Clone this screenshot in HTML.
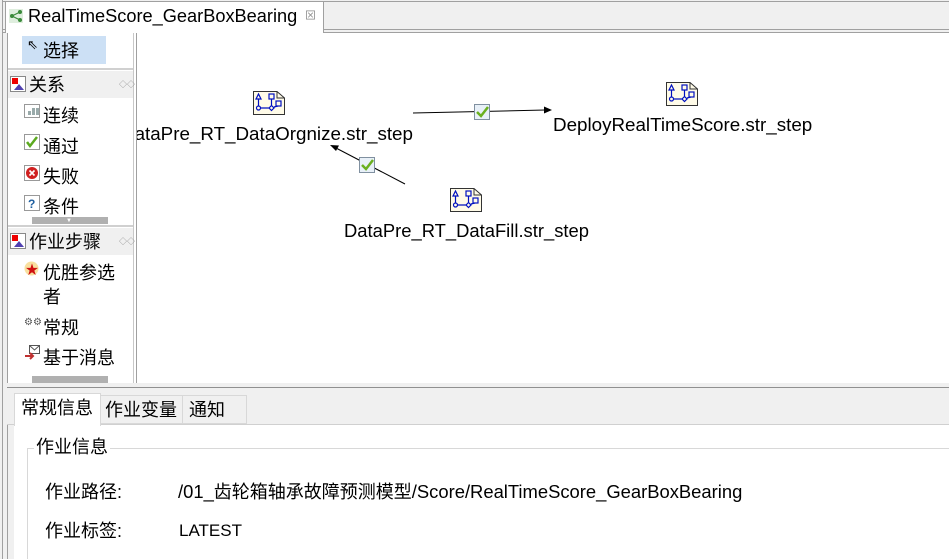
<!DOCTYPE html>
<html><head><meta charset="utf-8"><style>
*{margin:0;padding:0;box-sizing:border-box}
body{width:949px;height:559px;overflow:hidden;background:#fff;font-family:"Liberation Sans","Noto Sans CJK SC",sans-serif;position:relative;color:#000}
.a{position:absolute}
.t{font-size:17px;white-space:nowrap}
.pal{font-size:18px;white-space:nowrap;line-height:22px}
.c{font-size:18px}
</style></head><body>
<div class="a" style="left:0;top:0;width:949px;height:559px;background:#f0f0f0"></div>
<div class="a" style="left:2px;top:0;width:1px;height:559px;background:#a0a0a0"></div>
<div class="a" style="left:3px;top:1px;width:946px;height:1px;background:#a0a0a0"></div>
<div class="a" style="left:3px;top:29px;width:946px;height:1px;background:#a0a0a0"></div>
<div class="a" style="left:3px;top:32px;width:946px;height:1px;background:#a0a0a0"></div>
<div class="a" style="left:5px;top:2px;width:319px;height:31px;background:#fff;border-left:1px solid #a0a0a0;border-right:1px solid #a0a0a0"></div>
<svg class="a" style="left:9px;top:9px" width="14" height="14"><rect x="0" y="0" width="14" height="14" fill="#dfeede"/><circle cx="3" cy="7" r="2" fill="#3a8a3a"/><circle cx="11" cy="3" r="2" fill="#3a8a3a"/><circle cx="11" cy="11" r="2" fill="#3a8a3a"/><path d="M3 7L11 3M3 7L11 11" stroke="#3a8a3a" stroke-width="1.2"/></svg>
<div class="a t" style="left:28px;top:6px;font-size:18.2px">RealTimeScore_GearBoxBearing</div>
<div class="a" style="left:305px;top:7px;font-size:11px;color:#888">⊠</div>
<div class="a" style="left:7px;top:33px;width:942px;height:350px;background:#fff"></div>
<div class="a" style="left:7px;top:33px;width:1px;height:526px;background:#a0a0a0"></div>
<div class="a" style="left:133px;top:33px;width:1px;height:350px;background:#c8c8c8"></div>
<div class="a" style="left:136px;top:33px;width:1px;height:350px;background:#a0a0a0"></div>
<div class="a" style="left:22px;top:36px;width:84px;height:28px;background:#cce0f5"></div>
<div class="a" style="left:27px;top:37px;font-size:13px">⇖</div>
<div class="a pal" style="left:43px;top:40px">选择</div>
<div class="a" style="left:8px;top:68px;width:125px;height:2px;background:#d0d0d0"></div>
<div class="a" style="left:8px;top:71px;width:125px;height:27px;background:#f0f0f0"></div>
<svg class="a" style="left:10px;top:76px" width="16" height="16"><rect x=".5" y=".5" width="15" height="15" fill="#fff" stroke="#888"/><rect x="2" y="2" width="6" height="6" fill="#e00"/><path d="M4 14L9 8L14 14Z" fill="#5040b0"/></svg>
<div class="a pal" style="left:29px;top:74px">关系</div>
<div class="a" style="left:119px;top:79px;font-size:8px;color:#888">◇◇</div>
<svg class="a" style="left:24px;top:104px" width="16" height="14"><rect x=".5" y=".5" width="15" height="13" fill="#fff" stroke="#999"/><rect x="4" y="7" width="3" height="4" fill="#9aa"/><rect x="8" y="4" width="3" height="7" fill="#9aa"/><rect x="12" y="4" width="3" height="7" fill="#9aa"/></svg>
<div class="a pal" style="left:43px;top:105px">连续</div>
<svg class="a" style="left:24px;top:134px" width="16" height="16"><rect x=".5" y=".5" width="15" height="15" fill="#fff" stroke="#999"/><path d="M3 8L6 12L13 3" stroke="#5caa20" stroke-width="2.5" fill="none"/></svg>
<div class="a pal" style="left:43px;top:136px">通过</div>
<svg class="a" style="left:24px;top:165px" width="16" height="16"><rect x=".5" y=".5" width="15" height="15" fill="#fff" stroke="#999"/><circle cx="8" cy="8" r="6" fill="#d02020"/><path d="M5.5 5.5L10.5 10.5M10.5 5.5L5.5 10.5" stroke="#fff" stroke-width="1.6"/></svg>
<div class="a pal" style="left:43px;top:166px">失败</div>
<svg class="a" style="left:24px;top:195px" width="16" height="16"><rect x=".5" y=".5" width="15" height="15" fill="#fff" stroke="#999"/><text x="4" y="13" font-size="12" font-weight="bold" fill="#2060a0" font-family="Liberation Sans">?</text></svg>
<div class="a pal" style="left:43px;top:196px;height:21px;overflow:hidden">条件</div>
<div class="a" style="left:32px;top:217px;width:76px;height:7px;background:#b0b0b0"></div>
<div class="a" style="left:66px;top:218px;font-size:6px;color:#fff">▼</div>
<div class="a" style="left:8px;top:225px;width:125px;height:2px;background:#d0d0d0"></div>
<div class="a" style="left:8px;top:228px;width:125px;height:27px;background:#f0f0f0"></div>
<svg class="a" style="left:10px;top:233px" width="16" height="16"><rect x=".5" y=".5" width="15" height="15" fill="#fff" stroke="#888"/><rect x="2" y="2" width="6" height="6" fill="#e00"/><path d="M4 14L9 8L14 14Z" fill="#5040b0"/></svg>
<div class="a pal" style="left:29px;top:231px">作业步骤</div>
<div class="a" style="left:119px;top:236px;font-size:8px;color:#888">◇◇</div>
<svg class="a" style="left:24px;top:261px" width="15" height="15"><circle cx="7.5" cy="7.5" r="7" fill="#f8e0a0"/><text x="1.5" y="13" font-size="13" fill="#d01010">★</text></svg>
<div class="a pal" style="left:43px;top:262px">优胜参选</div>
<div class="a pal" style="left:43px;top:286px">者</div>
<div class="a" style="left:24px;top:317px;font-size:10px;color:#555">⚙⚙</div>
<div class="a pal" style="left:43px;top:317px">常规</div>
<svg class="a" style="left:24px;top:345px" width="17" height="17"><rect x="5.5" y=".5" width="10" height="8" fill="#fff" stroke="#555"/><path d="M5.5 .5L10.5 5L15.5 .5" stroke="#555" fill="none"/><path d="M1 11H9M6 8L9 11L6 14" stroke="#c03030" stroke-width="2" fill="none"/></svg>
<div class="a pal" style="left:43px;top:347px">基于消息</div>
<div class="a" style="left:32px;top:376px;width:76px;height:7px;background:#b0b0b0"></div>
<svg class="a" style="left:0;top:0" width="949" height="383">
 <line x1="413" y1="113" x2="545" y2="110" stroke="#000"/>
 <path d="M552 110L544 106.5L544 113.5Z" fill="#000"/>
 <line x1="405" y1="184" x2="336" y2="148" stroke="#000"/>
 <path d="M330 145L339 145.5L336 151Z" fill="#000"/>
 <rect x="474.5" y="104.5" width="15" height="15" fill="#e8f0f8" stroke="#8090a0"/>
 <path d="M477 112L481 116L488 107" stroke="#6ab020" stroke-width="2.5" fill="none"/>
 <rect x="359.5" y="157.5" width="15" height="15" fill="#e8f0f8" stroke="#8090a0"/>
 <path d="M362 165L366 169L373 160" stroke="#6ab020" stroke-width="2.5" fill="none"/>
</svg>
<svg class="a" style="left:253px;top:91px" width="32" height="24"><path d="M.5 .5H24L31.5 7V23.5H.5Z" fill="#fffbe8" stroke="#333"/><path d="M24 .5V7H31.5" fill="none" stroke="#333"/><g stroke="#0010c0" fill="none" stroke-width="1.2"><path d="M3 8L5.5 3L8 8Z"/><rect x="16" y="3" width="5" height="5"/><rect x="23" y="10" width="5" height="5"/><circle cx="5.5" cy="17" r="2"/><path d="M5.5 8V15M7.5 17H16M18.5 8V14M16 17L18.5 14.5L21 17L18.5 19.5ZM21 16L25 15"/></g></svg>
<svg class="a" style="left:666px;top:82px" width="32" height="24"><path d="M.5 .5H24L31.5 7V23.5H.5Z" fill="#fffbe8" stroke="#333"/><path d="M24 .5V7H31.5" fill="none" stroke="#333"/><g stroke="#0010c0" fill="none" stroke-width="1.2"><path d="M3 8L5.5 3L8 8Z"/><rect x="16" y="3" width="5" height="5"/><rect x="23" y="10" width="5" height="5"/><circle cx="5.5" cy="17" r="2"/><path d="M5.5 8V15M7.5 17H16M18.5 8V14M16 17L18.5 14.5L21 17L18.5 19.5ZM21 16L25 15"/></g></svg>
<svg class="a" style="left:450px;top:188px" width="32" height="24"><path d="M.5 .5H24L31.5 7V23.5H.5Z" fill="#fffbe8" stroke="#333"/><path d="M24 .5V7H31.5" fill="none" stroke="#333"/><g stroke="#0010c0" fill="none" stroke-width="1.2"><path d="M3 8L5.5 3L8 8Z"/><rect x="16" y="3" width="5" height="5"/><rect x="23" y="10" width="5" height="5"/><circle cx="5.5" cy="17" r="2"/><path d="M5.5 8V15M7.5 17H16M18.5 8V14M16 17L18.5 14.5L21 17L18.5 19.5ZM21 16L25 15"/></g></svg>
<div class="a" style="left:137px;top:120px;width:300px;height:30px;overflow:hidden"><div class="a t" style="left:-16px;top:3px;font-size:18.8px">DataPre_RT_DataOrgnize.str_step</div></div>
<div class="a t" style="left:553px;top:114px;font-size:18.8px">DeployRealTimeScore.str_step</div>
<div class="a t" style="left:344px;top:220px;font-size:18.4px">DataPre_RT_DataFill.str_step</div>
<div class="a" style="left:7px;top:383px;width:942px;height:4px;background:#f0f0f0"></div>
<div class="a" style="left:7px;top:387px;width:942px;height:1px;background:#909090"></div>
<div class="a" style="left:7px;top:388px;width:942px;height:36px;background:#f0f0f0"></div>
<div class="a" style="left:7px;top:424px;width:942px;height:1px;background:#d0d0d0"></div>
<div class="a" style="left:14px;top:425px;width:935px;height:134px;background:#fff"></div>
<div class="a" style="left:14px;top:393px;width:87px;height:33px;background:#fff;border:1px solid #d8d8d8;border-bottom:none"></div>
<div class="a" style="left:101px;top:395px;width:82px;height:29px;border:1px solid #d8d8d8;border-left:none"></div>
<div class="a" style="left:183px;top:395px;width:64px;height:29px;border:1px solid #d8d8d8;border-left:none"></div>
<div class="a pal" style="left:21px;top:397px">常规信息</div>
<div class="a pal" style="left:105px;top:399px">作业变量</div>
<div class="a pal" style="left:189px;top:399px">通知</div>
<div class="a" style="left:27px;top:448px;width:922px;height:111px;border-top:1px solid #d8d8d8;border-left:1px solid #d8d8d8"></div>
<div class="a pal" style="left:34px;top:436px;background:#fff;padding:0 2px">作业信息</div>
<div class="a pal" style="left:45px;top:481px">作业路径:</div>
<div class="a pal" style="left:178px;top:481px;font-size:18.4px">/01_<span class="c">齿轮箱轴承故障预测模型</span>/Score/RealTimeScore_GearBoxBearing</div>
<div class="a pal" style="left:45px;top:520px">作业标签:</div>
<div class="a pal" style="left:179px;top:520px;font-size:17px">LATEST</div>
</body></html>
